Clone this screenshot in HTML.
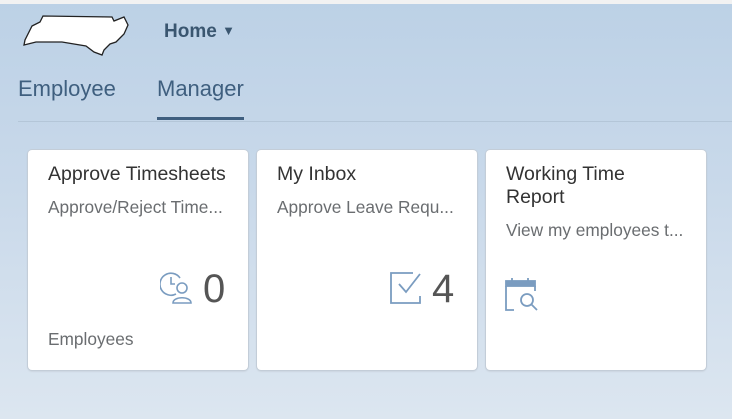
<!DOCTYPE html>
<html><head><style>
body{margin:0;width:732px;height:419px;overflow:hidden;font-family:"Liberation Sans",sans-serif;
background:linear-gradient(180deg,#bcd1e6 0%,#c9d9ea 45%,#dce6f0 100%);position:relative}
.top{position:absolute;left:0;top:0;width:732px;height:4px;background:#f2f2f2}
.home{position:absolute;left:164px;top:21px;font-size:19px;font-weight:bold;color:#3a5670}
.tab{position:absolute;top:76px;font-size:22px;color:#3f5f7f}
.line{position:absolute;left:18px;top:121px;width:714px;height:1px;background:#b4c6d8}
.ul{position:absolute;left:157px;top:117px;width:87px;height:3px;background:#3f5f7f}
.tile{position:absolute;top:150px;width:220px;height:220px;background:#fff;border-radius:4px;box-shadow:0 0 0 1px #c3cdd8,0 1px 2px rgba(0,0,0,.15)}
.t{position:absolute;left:20px;top:13px;font-size:19.5px;color:#333;line-height:23px;white-space:nowrap}
.s{position:absolute;left:20px;font-size:17.3px;color:#6a6d70;white-space:nowrap}
.n{position:absolute;font-size:40px;color:#555;top:117px}
</style></head><body>
<div class="top"></div>
<svg style="position:absolute;left:22px;top:12px" width="112" height="45" viewBox="0 0 112 45">
<path d="M10 14 L18 10 L21 4 L90 5 L92 9 L102 5 L106 13 L102 22 L94 30 L88 32 L82 38 L80 43 L72 40 L64 34 L52 32 L40 30 L28 30 L14 30 L2 33 L3 28 Z" fill="#fff" stroke="#222" stroke-width="1.3"/>
</svg>
<div class="home">Home <span style="font-size:13px;position:relative;top:-2px">▼</span></div>
<div class="tab" style="left:18px">Employee</div>
<div class="tab" style="left:157px">Manager</div>
<div class="line"></div><div class="ul"></div>

<div class="tile" style="left:28px">
<div class="t">Approve Timesheets</div>
<div class="s" style="top:47px">Approve/Reject Time...</div>
<svg style="position:absolute;left:132px;top:122px" width="36" height="34" viewBox="0 0 36 34" fill="none" stroke="#7a9cc0" stroke-width="1.6">
<path d="M16 22 A11 11 0 1 1 20 6"/><path d="M11 5 V12 H15"/>
<circle cx="22" cy="16" r="5"/><path d="M13 31 C13 24 31 24 31 31 Z"/>
</svg>
<div class="n" style="left:175px">0</div>
<div class="s" style="top:179px">Employees</div>
</div>

<div class="tile" style="left:257px">
<div class="t">My Inbox</div>
<div class="s" style="top:47px">Approve Leave Requ...</div>
<svg style="position:absolute;left:132px;top:120px" width="36" height="36" viewBox="0 0 36 36" fill="none" stroke="#7a9cc0" stroke-width="1.8">
<path d="M24 3 H2 V33 H31 V26"/><path d="M10 14 L17 22 L31 4"/>
</svg>
<div class="n" style="left:175px">4</div>
</div>

<div class="tile" style="left:486px">
<div class="t">Working Time<br>Report</div>
<div class="s" style="top:70px">View my employees t...</div>
<svg style="position:absolute;left:18px;top:127px" width="40" height="38" viewBox="0 0 40 38" fill="none" stroke="#7a9cc0" stroke-width="1.8">
<rect x="2" y="4" width="29" height="5" fill="#7a9cc0"/><path d="M8 1 V5 M24 1 V5"/>
<path d="M2 9 V33 H10 M31 9 V14"/><circle cx="23" cy="23" r="6"/><path d="M27 27 L33 33"/>
</svg>
</div>
</body></html>
